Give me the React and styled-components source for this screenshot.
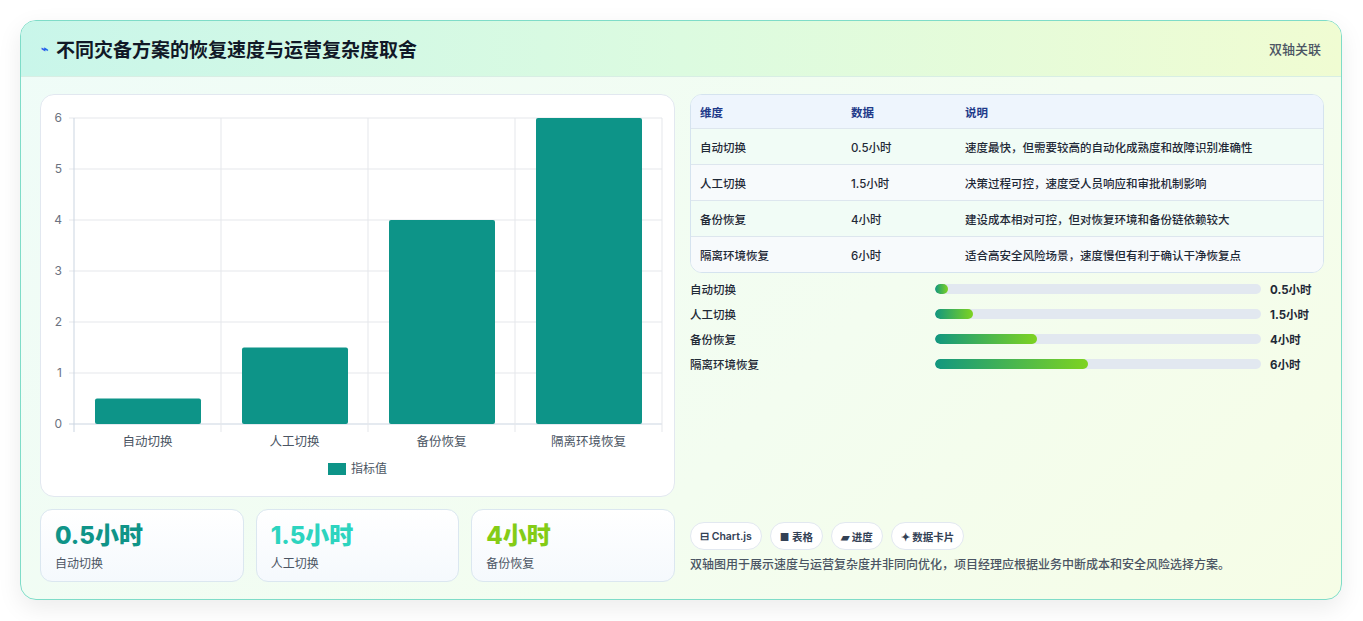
import React from "react";
import styled, { createGlobalStyle } from "styled-components";

const G = createGlobalStyle`
  body{margin:0;background:#fff;font-family:Inter,"Noto Sans CJK SC",sans-serif;color:#1f2937;}
`;
const Page = styled.div`padding:20px 21px 21px 20px;height:621px;box-sizing:border-box;`;
const Card = styled.div`
  height:580px;box-sizing:border-box;border:1px solid #7fdcc8;border-radius:16px;overflow:hidden;
  background:linear-gradient(135deg,#effcf8 0%,#f3fdf0 60%,#f6fde6 100%);
  box-shadow:0 8px 24px rgba(0,0,0,.08);display:flex;flex-direction:column;`;
const Header = styled.div`
  height:55px;flex:none;display:flex;align-items:center;justify-content:space-between;padding:0 20px;
  background:linear-gradient(90deg,#c9f6ea 0%,#dcfbe0 50%,#f0fcd2 100%);border-bottom:1px solid #d8eee4;`;
const Title = styled.h1`margin:0;font-size:19px;font-weight:700;color:#111827;display:flex;align-items:center;gap:8px;`;
const Tag = styled.span`font-size:13px;color:#4b5563;font-weight:500;`;
const Body = styled.div`flex:1;display:grid;grid-template-columns:635px 634px;gap:15px;padding:17px 18px 18px 19px;`;
const Col = styled.div`display:flex;flex-direction:column;gap:12px;min-height:0;`;
const ChartCard = styled.div`height:403px;box-sizing:border-box;background:#fff;border:1px solid #e2e8f0;border-radius:14px;`;
const Stats = styled.div`display:grid;grid-template-columns:repeat(3,1fr);gap:12px;`;
const Stat = styled.div`height:73px;box-sizing:border-box;border:1px solid #dbe7f0;border-radius:12px;padding:10px 14px;
  background:linear-gradient(180deg,#fff,#f5f9fd);`;
const StatV = styled.div`font-size:24px;font-weight:800;color:${p=>p.c};line-height:32px;`;
const StatL = styled.div`font-size:12px;color:#4b5563;margin-top:2px;`;
const Table = styled.div`border:1px solid #d5e3ef;border-radius:12px;overflow:hidden;background:#fff;`;
const Row = styled.div`display:grid;grid-template-columns:151px 114px 1fr;height:${p=>p.h}px;align-items:center;padding:0 9px;
  font-size:11.5px;font-weight:${p=>p.head?600:500};color:${p=>p.head?"#1e3a8a":"#1f2937"};
  background:${p=>p.head?"#eef5fd":p.alt?"#f7fafc":"#f1fcf6"};border-top:${p=>p.first?"none":"1px solid #dde6ee"};`;
const Bars = styled.div`display:flex;flex-direction:column;gap:8px;padding-top:7px;`;
const BarRow = styled.div`display:grid;grid-template-columns:236px 326px 1fr;gap:9px;align-items:center;height:17px;font-size:11.5px;font-weight:500;`;
const Track = styled.div`height:10px;border-radius:5px;background:#e2e8f0;overflow:hidden;`;
const Fill = styled.div`height:100%;border-radius:5px;background:linear-gradient(90deg,#12977f,#7ed321);`;
const BarVal = styled.span`font-weight:700;`;
const Spacer = styled.div`flex:1;`;
const Chips = styled.div`display:flex;gap:8px;`;
const Chip = styled.span`height:28px;box-sizing:border-box;padding:0 9px;border:1px solid #e2e8f0;border-radius:14px;background:#fff;
  display:flex;align-items:center;gap:4px;font-size:10.5px;font-weight:600;color:#334155;`;
const Note = styled.p`margin:5px 0 10px;font-size:12px;color:#4b5563;font-weight:500;`;

const data=[["自动切换",0.5,"速度最快，但需要较高的自动化成熟度和故障识别准确性"],["人工切换",1.5,"决策过程可控，速度受人员响应和审批机制影响"],["备份恢复",4,"建设成本相对可控，但对恢复环境和备份链依赖较大"],["隔离环境恢复",6,"适合高安全风险场景，速度慢但有利于确认干净恢复点"]];

function Chart(){
  const x0=33,x1=621,y0=329,u=51;const w=(x1-x0)/4;
  return <svg width="634" height="401" style={{display:"block"}}>
    {[0,1,2,3,4,5,6].map(i=><g key={i}>
      <line x1={x0-5} x2={x1} y1={y0-i*u} y2={y0-i*u} stroke={i?"#e5e7eb":"#cbd5e1"}/>
      <text x={x0-12} y={y0-i*u+4} fontSize="12" fill="#6b7280" textAnchor="end" fontFamily="Inter">{i}</text></g>)}
    {[0,1,2,3,4].map(i=><line key={i} x1={x0+i*w} x2={x0+i*w} y1={y0-6*u} y2={y0+8} stroke={i?"#e5e7eb":"#cbd5e1"}/>)}
    {data.map((d,i)=><g key={i}>
      <rect x={x0+i*w+21} y={y0-d[1]*u} width={106} height={d[1]*u} rx="2" fill="#0d9488"/>
      <text x={x0+i*w+w/2} y={y0+22} fontSize="12.5" fill="#4b5563" textAnchor="middle" fontFamily="Noto Sans CJK SC">{d[0]}</text></g>)}
    <rect x="287" y="368" width="18" height="12" fill="#0d9488"/>
    <text x="310" y="378" fontSize="12" fill="#4b5563" fontFamily="Noto Sans CJK SC">指标值</text>
  </svg>;
}

export default function App(){
  return <><G/><Page><Card>
    <Header><Title><span style={{color:"#2563eb",fontSize:12}}>⌁</span>不同灾备方案的恢复速度与运营复杂度取舍</Title><Tag>双轴关联</Tag></Header>
    <Body>
      <Col>
        <ChartCard><Chart/></ChartCard>
        <Stats>
          {[["0.5小时","自动切换","#0f9488"],["1.5小时","人工切换","#2dd4bf"],["4小时","备份恢复","#84cc16"]].map(s=>
            <Stat key={s[1]}><StatV c={s[2]}>{s[0]}</StatV><StatL>{s[1]}</StatL></Stat>)}
        </Stats>
      </Col>
      <Col style={{gap:0}}>
        <Table>
          <Row head first h={33}><span>维度</span><span>数据</span><span>说明</span></Row>
          {data.map((d,i)=><Row key={i} alt={i%2} h={35}><span>{d[0]}</span><span>{d[1]}小时</span><span>{d[2]}</span></Row>)}
        </Table>
        <Bars>{data.map(d=><BarRow key={d[0]}><span>{d[0]}</span><Track><Fill style={{width:`${Math.max(d[1]/12.8*100,3.7)}%`}}/></Track><BarVal>{d[1]}小时</BarVal></BarRow>)}</Bars>
        <Spacer/>
        <Chips><Chip>⊟ Chart.js</Chip><Chip>■ 表格</Chip><Chip>▰ 进度</Chip><Chip>✦ 数据卡片</Chip></Chips>
        <Note>双轴图用于展示速度与运营复杂度并非同向优化，项目经理应根据业务中断成本和安全风险选择方案。</Note>
      </Col>
    </Body>
  </Card></Page></>;
}
